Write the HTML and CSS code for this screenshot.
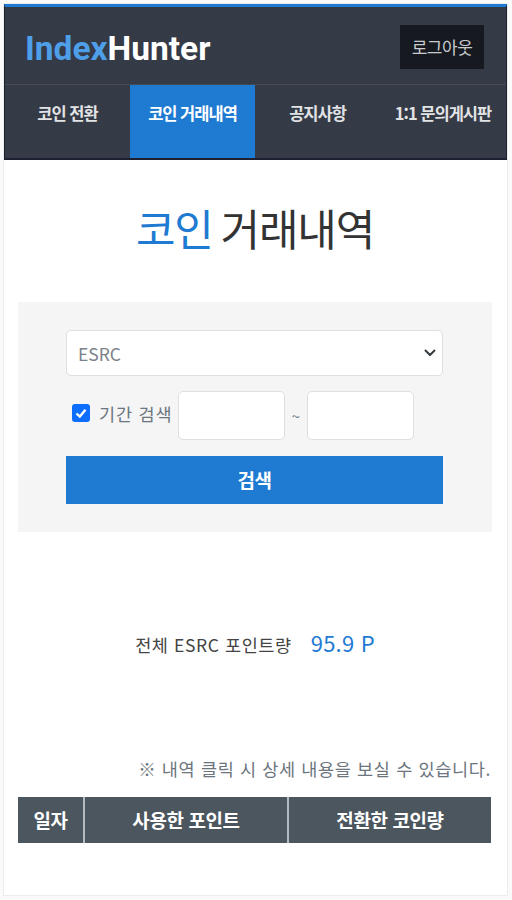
FILE: index.html
```html
<!DOCTYPE html>
<html lang="ko">
<head>
<meta charset="utf-8">
<title>IndexHunter</title>
<link rel="stylesheet" href="styles.css">
</head>
<body>
<div class="frame">
  <header class="header">
    <div class="topbar">
      <div class="logo"><span class="logo-blue">Index</span>Hunter</div>
      <a class="logout">로그아웃</a>
    </div>
    <nav class="nav">
      <a class="nav-item w1">코인 전환</a>
      <a class="nav-item w2 active">코인 거래내역</a>
      <a class="nav-item w3">공지사항</a>
      <a class="nav-item w4">1:1 문의게시판</a>
    </nav>
  </header>
  <main class="main">
    <h1 class="title"><span class="title-blue">코인</span> 거래내역</h1>
    <section class="panel">
      <div class="select">
        <span>ESRC</span>
        <svg class="chev" width="12" height="8" viewBox="0 0 12 8"><path d="M1.5 1.5 6 6l4.5-4.5" fill="none" stroke="#343a40" stroke-width="2" stroke-linecap="round" stroke-linejoin="round"/></svg>
      </div>
      <div class="period">
        <span class="check"><svg width="18" height="18" viewBox="0 0 18 18"><path d="M4.5 9.5 7.8 12.6 13.5 5.8" fill="none" stroke="#fff" stroke-width="2.4"/></svg></span>
        <span class="period-label">기간 검색</span>
        <span class="date"></span>
        <span class="tilde">~</span>
        <span class="date"></span>
      </div>
      <button class="search">검색</button>
    </section>
    <p class="total"><span class="total-label">전체 ESRC 포인트량</span><span class="total-value">95.9 P</span></p>
    <p class="hint">※ 내역 클릭 시 상세 내용을 보실 수 있습니다.</p>
    <table class="table">
      <thead>
        <tr><th class="c1">일자</th><th class="c2">사용한 포인트</th><th class="c3">전환한 코인량</th></tr>
      </thead>
    </table>
  </main>
</div>
</body>
</html>
```
FILE: styles.css
```css
* { box-sizing: border-box; }
html, body { margin: 0; height: 900px; background: #fafafa; overflow: hidden; }
body { padding: 4px 5px 4px 4px; font-family: "Noto Sans CJK KR", "Noto Sans", sans-serif; color: #333; }
.frame { height: 891px; background: #fff; box-shadow: 0 0 0 1px #ececec; }
.header { height: 156px; background: #343a46; border-top: 3px solid #1f7ad2; border-left: 1px solid #1c2030; border-right: 1px solid #1c2030; border-bottom: 2px solid #1c2030; }
.topbar { height: 78px; display: flex; justify-content: space-between; align-items: center; padding: 2px 22px 0 20px; border-bottom: 1px solid #454a55; }
.logo { font-family: Roboto, "Liberation Sans", sans-serif; font-size: 33.5px; font-weight: 700; letter-spacing: 0; color: #fff; margin-top: 3px; }
.logo-blue { color: #4f9ee8; }
.logout { width: 84px; height: 44px; background: #16191f; color: #c9cbcf; font-size: 17px; letter-spacing: -0.5px; display: flex; align-items: center; justify-content: center; }
.nav { display: flex; height: 73px; }
.nav-item { color: #e2e3e5; font-size: 16.5px; font-weight: 700; letter-spacing: -1px; display: flex; justify-content: center; padding-top: 15px; line-height: 26px; white-space: nowrap; }
.nav-item.active { background: #1f7ad2; color: #fff; }
.w1 { width: 125px; }
.w2 { width: 125px; }
.w3 { width: 125px; }
.w4 { flex: 1; }
.main { padding: 0 15px 0 14px; }
.title { margin: 0; height: 142px; padding-top: 37px; text-align: center; font-size: 43px; font-weight: 400; line-height: 60px; letter-spacing: -1.2px; word-spacing: -3px; color: #333; }
.title-blue { color: #1f7ad2; }
.panel { height: 230px; background: #f5f5f5; padding: 28px 49px 0 48px; display: flex; flex-direction: column; }
.select { height: 46px; background: #fff; border: 1px solid #dedfe2; border-radius: 5px; display: flex; align-items: center; justify-content: space-between; padding: 0 6px 0 11px; color: #7b8289; font-size: 17.5px; }
.period { display: flex; align-items: center; margin-top: 15px; height: 49px; }
.check { width: 18px; height: 18px; background: #0d6efd; border-radius: 3px; margin-left: 6px; margin-top: -6px; display: flex; }
.period-label { margin-left: 9px; margin-top: -4px; color: #6c757d; font-size: 17.5px; letter-spacing: 0.8px; width: 79px; white-space: nowrap; }
.date { width: 107px; height: 49px; background: #fff; border: 1px solid #dedfe2; border-radius: 5px; }
.tilde { width: 22px; text-align: center; color: #6c757d; font-size: 15px; }
.search { display: block; width: 100%; height: 48px; margin-top: 16px; padding-bottom: 2px; background: #1f7ad2; border: 0; color: #fff; font-family: inherit; font-size: 19px; font-weight: 700; letter-spacing: -0.5px; }
.total { margin: 0; height: 225px; padding-top: 96px; display: flex; justify-content: center; gap: 19px; align-items: baseline; line-height: 28px; }
.total-label { color: #444; font-size: 17.5px; letter-spacing: 0.6px; }
.total-value { color: #1f7ad2; font-size: 22px; letter-spacing: 0.2px; }
.hint { margin: 0; text-align: right; color: #6c757d; font-size: 17.5px; line-height: 24px; height: 40px; letter-spacing: 0.65px; padding-right: 1px; white-space: nowrap; }
.table { width: 473px; border-collapse: collapse; table-layout: fixed; }
.table th { height: 46px; background: #4b565e; color: #fff; font-size: 19px; font-weight: 700; letter-spacing: -0.4px; padding: 0 0 2px; border-right: 2px solid #b4babe; }
.table th.c3 { border-right: 0; }
.c1 { width: 66px; }
.c2 { width: 204px; }
.c3 { width: 203px; }
```
